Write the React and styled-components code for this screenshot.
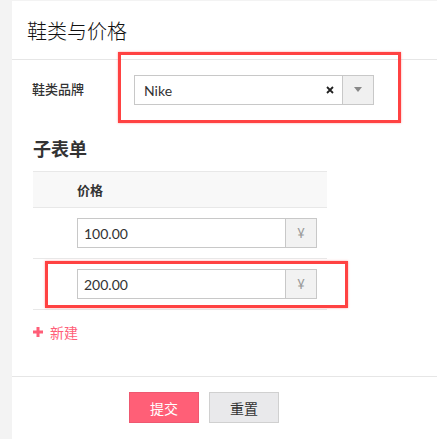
import React from "react";
import styled, { createGlobalStyle } from "styled-components";

const GlobalStyle = createGlobalStyle`
  html, body {
    margin: 0;
    padding: 0;
    background: #f3f3f3;
  }
  body {
    font-family: Lato, "Noto Sans CJK SC", sans-serif;
    color: #333;
  }
`;

const Page = styled.div`
  position: relative;
  padding: 1px 0 0 12px;
  height: 438px;
  overflow: hidden;
`;

const Panel = styled.div`
  background: #fff;
  height: 438px;
`;

const Header = styled.div`
  height: 58px;
  border-bottom: 1px solid #e6e6e6;
  display: flex;
  align-items: center;
  padding-left: 15px;
`;

const Title = styled.h1`
  margin: 0;
  font-size: 20px;
  font-weight: 300;
  color: #111;
  font-family: "Noto Sans CJK SC", sans-serif;
`;

const Body = styled.div`
  padding: 15px 0 0 20px;
`;

const FieldRow = styled.div`
  display: flex;
  align-items: center;
  height: 30px;
`;

const Label = styled.label`
  width: 102px;
  margin-top: -3px;
  font-size: 13px;
  font-weight: 500;
  color: #333;
  font-family: "Noto Sans CJK SC", sans-serif;
`;

const Select = styled.div`
  width: 240px;
  height: 30px;
  box-sizing: border-box;
  border: 1px solid #c8c8c8;
  display: flex;
  align-items: stretch;
`;

const SelectValue = styled.div`
  flex: 1;
  display: flex;
  align-items: center;
  padding-left: 9px;
  font-size: 14px;
  color: #333;
`;

const Clear = styled.span`
  display: flex;
  align-items: center;
  padding-right: 8px;
`;

const Arrow = styled.div`
  width: 30px;
  border-left: 1px solid #c8c8c8;
  background: #f0f0f0;
  display: flex;
  align-items: center;
  justify-content: center;

  &::after {
    content: "";
    border-left: 4px solid transparent;
    border-right: 4px solid transparent;
    border-top: 5px solid #888;
    margin-top: -2px;
  }
`;

const SubTitle = styled.h2`
  margin: 31px 0 0 1px;
  font-size: 18px;
  line-height: 24px;
  font-weight: 700;
  color: #333;
  font-family: "Noto Sans CJK SC", sans-serif;
`;

const Table = styled.div`
  margin: 11px 0 0 1px;
  width: 294px;
  border-top: 1px solid #e8e8e8;
`;

const Row = styled.div`
  display: flex;
  align-items: center;
  height: ${(p) => (p.head ? "35px" : "50px")};
  background: ${(p) => (p.head ? "#f8f8f8" : "#fff")};
  border-bottom: 1px solid #e8e8e8;
  padding-left: 44px;
`;

const HeadCell = styled.div`
  font-size: 13px;
  font-weight: 700;
  color: #333;
  font-family: "Noto Sans CJK SC", sans-serif;
`;

const InputGroup = styled.div`
  width: 240px;
  height: 30px;
  box-sizing: border-box;
  border: 1px solid #c8c8c8;
  display: flex;
`;

const Input = styled.div`
  flex: 1;
  display: flex;
  align-items: center;
  padding-left: 6px;
  font-size: 14px;
  color: #333;
`;

const Addon = styled.div`
  width: 30px;
  border-left: 1px solid #c8c8c8;
  background: #f2f2f2;
  color: #999;
  font-size: 13px;
  display: flex;
  align-items: center;
  justify-content: center;
`;

const AddLink = styled.div`
  margin: 12px 0 0 1px;
  display: flex;
  align-items: center;
  gap: 7px;
  height: 20px;
  color: #ff5e78;
  font-size: 14px;
  font-family: "Noto Sans CJK SC", sans-serif;
`;

const Footer = styled.div`
  margin-top: 34px;
  border-top: 1px solid #e6e6e6;
  padding: 15px 0 0 117px;
  display: flex;
  gap: 10px;
`;

const Button = styled.button`
  width: 70px;
  height: 31px;
  box-sizing: border-box;
  font-size: 14px;
  font-family: "Noto Sans CJK SC", sans-serif;
  border: 1px solid ${(p) => (p.primary ? "#ee5870" : "#d0d0d0")};
  background: ${(p) => (p.primary ? "#ff5f77" : "#e9e9eb")};
  color: ${(p) => (p.primary ? "#fff" : "#333")};
  padding: 0;
`;

const Highlight = styled.div`
  position: absolute;
  box-sizing: border-box;
  border: 3px solid #ff4242;
  box-shadow: 0 0 2px rgba(255, 66, 66, 0.5);
`;

function PlusIcon() {
  return (
    <svg width="10" height="10" viewBox="0 0 10 10">
      <rect x="3.5" y="0" width="3" height="10" fill="#ff5e78" />
      <rect x="0" y="3.5" width="10" height="3" fill="#ff5e78" />
    </svg>
  );
}

function ClearIcon() {
  return (
    <svg width="8" height="8" viewBox="0 0 8 8">
      <path d="M1 1 L7 7 M7 1 L1 7" stroke="#222" strokeWidth="1.8" />
    </svg>
  );
}

const prices = ["100.00", "200.00"];

export default function App() {
  return (
    <>
      <GlobalStyle />
      <Page>
        <Panel>
          <Header>
            <Title>鞋类与价格</Title>
          </Header>
          <Body>
            <FieldRow>
              <Label>鞋类品牌</Label>
              <Select>
                <SelectValue>Nike</SelectValue>
                <Clear>
                  <ClearIcon />
                </Clear>
                <Arrow />
              </Select>
            </FieldRow>
            <SubTitle>子表单</SubTitle>
            <Table>
              <Row head>
                <HeadCell>价格</HeadCell>
              </Row>
              {prices.map((p) => (
                <Row key={p}>
                  <InputGroup>
                    <Input>{p}</Input>
                    <Addon>¥</Addon>
                  </InputGroup>
                </Row>
              ))}
            </Table>
            <AddLink>
              <PlusIcon />
              新建
            </AddLink>
          </Body>
          <Footer>
            <Button primary>提交</Button>
            <Button>重置</Button>
          </Footer>
        </Panel>
        <Highlight style={{ left: 118, top: 52, width: 283, height: 71 }} />
        <Highlight style={{ left: 45, top: 261, width: 303, height: 47 }} />
      </Page>
    </>
  );
}
